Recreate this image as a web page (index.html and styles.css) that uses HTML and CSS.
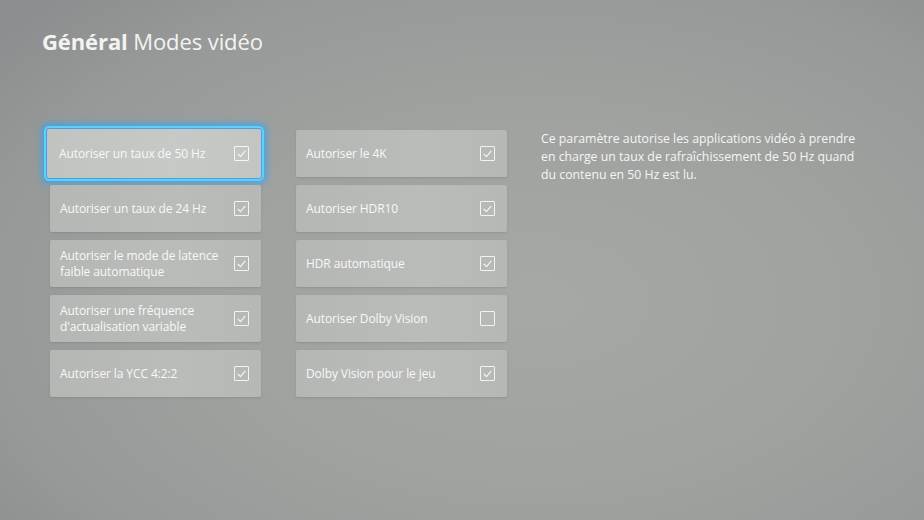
FILE: index.html
```html
<!DOCTYPE html>
<html lang="fr">
<head>
<meta charset="utf-8">
<title>Modes vidéo</title>
<link rel="stylesheet" href="styles.css">
</head>
<body>
<div class="screen">
  <h1 class="title"><span class="title-bold">Général</span> Modes vidéo</h1>
  <div class="content">
    <div class="col col-left">
      <div class="card focused"><span class="label">Autoriser un taux de 50 Hz</span><span class="box checked"><svg viewBox="0 0 16 16"><path d="M3.8 8.3 L6.8 11.2 L12.4 4.6"/></svg></span></div>
      <div class="card"><span class="label">Autoriser un taux de 24 Hz</span><span class="box checked"><svg viewBox="0 0 16 16"><path d="M3.8 8.3 L6.8 11.2 L12.4 4.6"/></svg></span></div>
      <div class="card"><span class="label">Autoriser le mode de latence faible automatique</span><span class="box checked"><svg viewBox="0 0 16 16"><path d="M3.8 8.3 L6.8 11.2 L12.4 4.6"/></svg></span></div>
      <div class="card"><span class="label">Autoriser une fréquence d'actualisation variable</span><span class="box checked"><svg viewBox="0 0 16 16"><path d="M3.8 8.3 L6.8 11.2 L12.4 4.6"/></svg></span></div>
      <div class="card"><span class="label">Autoriser la YCC 4:2:2</span><span class="box checked"><svg viewBox="0 0 16 16"><path d="M3.8 8.3 L6.8 11.2 L12.4 4.6"/></svg></span></div>
    </div>
    <div class="col col-right">
      <div class="card"><span class="label">Autoriser le 4K</span><span class="box checked"><svg viewBox="0 0 16 16"><path d="M3.8 8.3 L6.8 11.2 L12.4 4.6"/></svg></span></div>
      <div class="card"><span class="label">Autoriser HDR10</span><span class="box checked"><svg viewBox="0 0 16 16"><path d="M3.8 8.3 L6.8 11.2 L12.4 4.6"/></svg></span></div>
      <div class="card"><span class="label">HDR automatique</span><span class="box checked"><svg viewBox="0 0 16 16"><path d="M3.8 8.3 L6.8 11.2 L12.4 4.6"/></svg></span></div>
      <div class="card"><span class="label">Autoriser Dolby Vision</span><span class="box"></span></div>
      <div class="card"><span class="label">Dolby Vision pour le jeu</span><span class="box checked"><svg viewBox="0 0 16 16"><path d="M3.8 8.3 L6.8 11.2 L12.4 4.6"/></svg></span></div>
    </div>
    <p class="desc">Ce paramètre autorise les applications vidéo à prendre en charge un taux de rafraîchissement de 50 Hz quand du contenu en 50 Hz est lu.</p>
  </div>
</div>
</body>
</html>
```

FILE: styles.css
```css
html, body {
  margin: 0;
  padding: 0;
}
body {
  width: 924px;
  height: 520px;
  overflow: hidden;
  font-family: "Open Sans", "Noto Sans", sans-serif;
  color: #f4f5f4;
  background:
    radial-gradient(ellipse 75% 80% at 58% 58%, #a6a8a6 0%, #a0a2a0 45%, #979998 80%, #8c8e8f 100%);
}
.screen {
  height: 520px;
  padding: 25px 0 0 42px;
  box-sizing: border-box;
}
.title {
  margin: 0;
  font-size: 22px;
  line-height: 32px;
  font-weight: 400;
  color: #f2f3f2;
  letter-spacing: -0.1px;
}
.title-bold {
  font-weight: 700;
}
.content {
  display: flex;
  align-items: flex-start;
  margin-top: 73px;
}
.col {
  display: flex;
  flex-direction: column;
  gap: 8px;
  width: 211px;
}
.col-left {
  margin-left: 8px;
}
.col-right {
  margin-left: 35px;
}
.card {
  height: 47px;
  box-sizing: border-box;
  padding: 0 12px 0 10px;
  display: flex;
  align-items: center;
  justify-content: space-between;
  background: linear-gradient(90deg, #b5b7b5 0%, #babcba 60%, #b6b8b6 100%);
  border-radius: 2px;
  box-shadow: 0 1px 2px rgba(80, 80, 80, 0.2);
}
.card.focused {
  background: linear-gradient(90deg, #c1c3c1 0%, #c7c9c7 60%, #c3c5c3 100%);
  margin-left: -3px;
  height: 49px;
  margin-top: -1px;
  margin-bottom: -1px;
  padding-left: 12px;
  outline: 2px solid #5cd0ff;
  outline-offset: 1px;
  box-shadow: 0 0 7px 5px rgba(40, 165, 255, 0.8);
}
.label {
  font-size: 12px;
  line-height: 16px;
  max-width: 170px;
  color: #f7f8f7;
  letter-spacing: -0.1px;
}
.box {
  flex: none;
  width: 15px;
  height: 15px;
  border: 1.5px solid rgba(250, 250, 250, 0.9);
  border-radius: 1px;
  box-sizing: border-box;
  display: flex;
  align-items: center;
  justify-content: center;
}
.box svg {
  width: 14px;
  height: 14px;
  fill: none;
  stroke: #f6f7f6;
  stroke-width: 1.4;
  stroke-linecap: round;
  stroke-linejoin: round;
}
.desc {
  margin: 0 0 0 34px;
  width: 318px;
  font-size: 12.3px;
  line-height: 18px;
  color: #f4f5f4;
}
```
